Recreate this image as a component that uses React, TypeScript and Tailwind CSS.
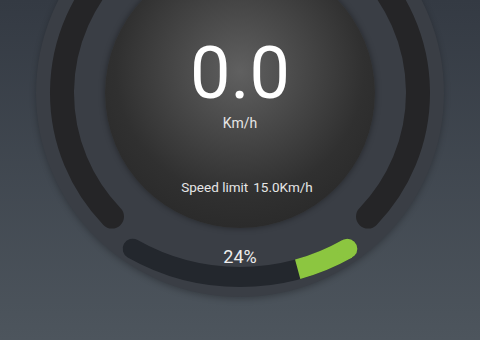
const progress = 0.24

// bottom arc: circle centred at (204,170) r=218, runs from the left end round to the right end
const arcPoint = (deg: number) => {
    const a = (deg * Math.PI) / 180
    return [204 + 218 * Math.cos(a), 170 + 218 * Math.sin(a)]
}

const Gauge = () => {
    const startDeg = 60.5
    const endDeg = 119.5
    const [rx, ry] = arcPoint(startDeg)
    const [lx, ly] = arcPoint(endDeg)
    const [gx, gy] = arcPoint(startDeg + (endDeg - startDeg) * progress)

    return (
        <div className="relative mt-[-111px] h-[408px] w-[408px] shrink-0 rounded-full bg-[#3a3e45] shadow-[0_2px_6px_rgba(0,0,0,0.25)]">
            <svg className="absolute inset-0" width="408" height="408" viewBox="0 0 408 408">
                <path d="M 76 327.6 A 178 178 0 1 1 332 327.6" fill="none" stroke="#252527" strokeWidth="24" strokeLinecap="round" />
                <path d={`M ${lx} ${ly} A 218 218 0 0 0 ${rx} ${ry}`} fill="none" stroke="#23272d" strokeWidth="20" strokeLinecap="round" />
                <path d={`M ${gx} ${gy} A 218 218 0 0 0 ${rx} ${ry}`} fill="none" stroke="#8cc640" strokeWidth="20" strokeLinecap="butt" />
                <circle cx={rx} cy={ry} r="10" fill="#8cc640" />
            </svg>
            <div className="relative flex flex-col items-center pt-[69px] font-['Roboto',sans-serif] text-white">
                <div className="flex h-[270px] w-[270px] flex-col items-center rounded-full bg-[radial-gradient(circle_at_50%_42%,#606060_0%,#484848_30%,#303030_60%,#232323_100%)] pt-[80px] shadow-[0_0_6px_rgba(0,0,0,0.4)]">
                    <span className="text-[72px] leading-none">0.0</span>
                    <span className="mt-[6px] text-[14px] leading-none text-[#e6e6e6]">Km/h</span>
                    <span className="mt-[51px] ml-[14px] flex gap-[5px] text-[13.5px] leading-none text-[#e6e6e6]">
                        <span>Speed limit</span>
                        <span>15.0Km/h</span>
                    </span>
                </div>
                <span className="mt-[20px] text-[18px] leading-none text-[#ececec]">24%</span>
            </div>
        </div>
    )
}

export default function App() {
    return (
        <div className="flex h-[340px] w-[480px] justify-center overflow-hidden bg-[linear-gradient(to_bottom,#343a43,#4d555d)]">
            <Gauge />
        </div>
    )
}
